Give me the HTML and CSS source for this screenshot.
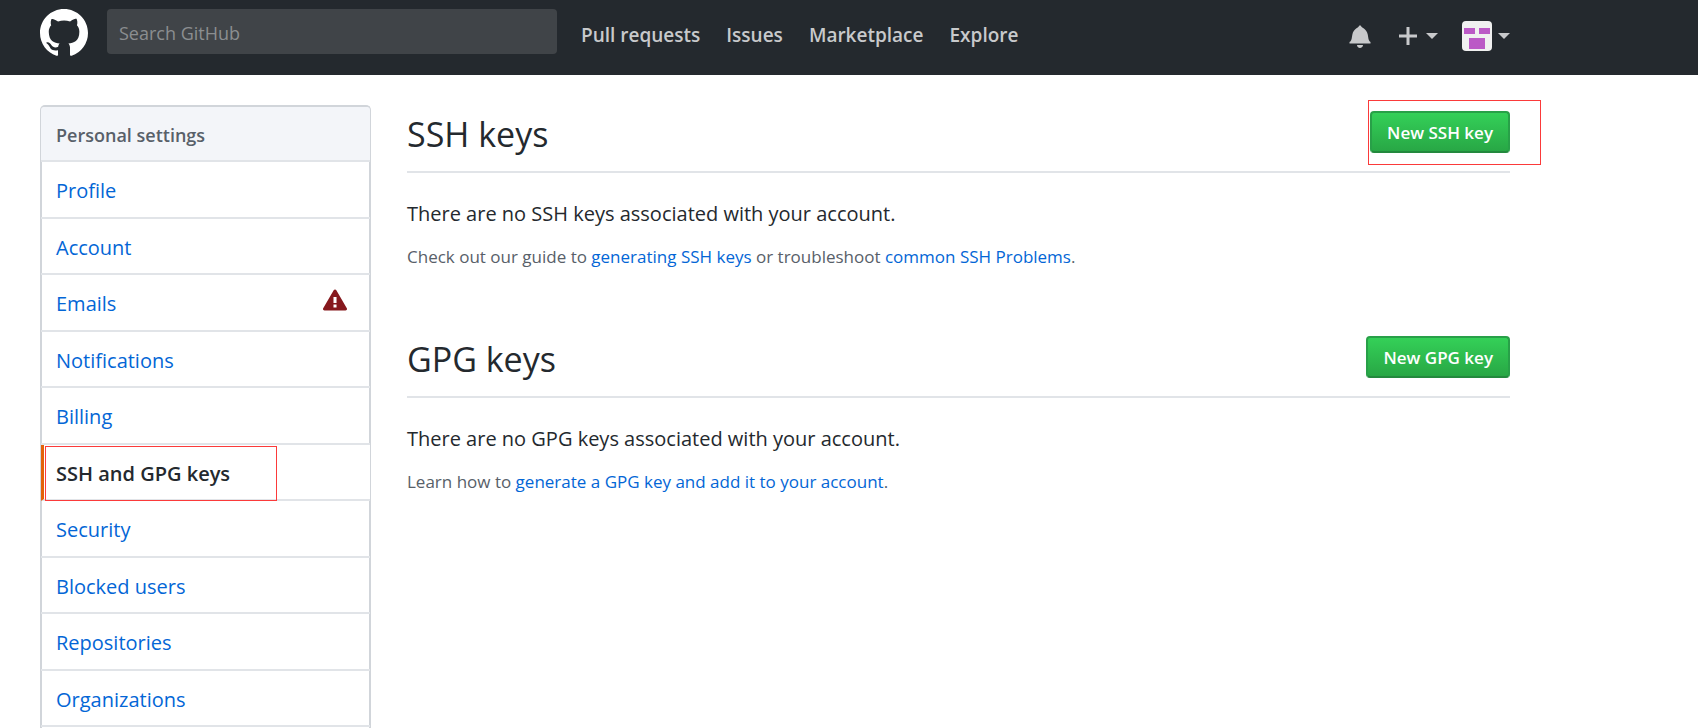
FILE: index.html
```
<!DOCTYPE html>
<html lang="en">
<head>
<meta charset="utf-8">
<meta name="viewport" content="width=device-width, initial-scale=1">
<title>SSH and GPG keys</title>
<link rel="stylesheet" href="styles.css">
</head>
<body>
<header class="header">
  <div class="header-inner">
    <a class="logo" href="#" aria-label="Homepage">
      <svg width="48" height="48" viewBox="0 0 16 16" aria-hidden="true"><path fill="currentColor" fill-rule="evenodd" d="M8 0C3.58 0 0 3.58 0 8c0 3.54 2.29 6.53 5.47 7.59.4.07.55-.17.55-.38 0-.19-.01-.82-.01-1.49-2.01.37-2.53-.49-2.69-.94-.09-.23-.48-.94-.82-1.13-.28-.15-.68-.52-.01-.53.63-.01 1.08.58 1.23.82.72 1.21 1.87.87 2.33.66.07-.52.28-.87.51-1.07-1.78-.2-3.64-.89-3.64-3.95 0-.87.31-1.59.82-2.15-.08-.2-.36-1.02.08-2.12 0 0 .67-.21 2.2.82.64-.18 1.32-.27 2-.27.68 0 1.36.09 2 .27 1.53-1.04 2.2-.82 2.2-.82.44 1.1.16 1.92.08 2.12.51.56.82 1.27.82 2.15 0 3.07-1.87 3.75-3.65 3.95.29.25.54.73.54 1.48 0 1.07-.01 1.93-.01 2.2 0 .21.15.46.55.38A8.013 8.013 0 0 0 16 8c0-4.42-3.58-8-8-8z"/></svg>
    </a>
    <input class="search" type="search" placeholder="Search GitHub" aria-label="Search GitHub">
    <nav class="top-nav" aria-label="Global">
      <a href="#">Pull requests</a>
      <a href="#">Issues</a>
      <a href="#">Marketplace</a>
      <a href="#">Explore</a>
    </nav>
    <div class="user-nav">
      <a class="bell" href="#" aria-label="Notifications">
        <svg width="22" height="24" viewBox="0 0 14 16" aria-hidden="true"><path fill="currentColor" d="M14 12v1H0v-1l.73-.58c.77-.77.81-2.55 1.19-4.42C2.69 3.23 6 2 6 2c0-.55.45-1 1-1s1 .45 1 1c0 0 3.39 1.23 4.16 5 .38 1.88.42 3.66 1.19 4.42l.66.58H14zm-7 4c1.11 0 2-.89 2-2H5c0 1.11.89 2 2 2z"/></svg>
      </a>
      <button class="menu menu-add" type="button" aria-label="Create new">
        <svg width="18" height="24" viewBox="0 0 12 16" aria-hidden="true"><path fill="currentColor" d="M12 9H7v5H5V9H0V7h5V2h2v5h5v2z"/></svg>
        <span class="caret"></span>
      </button>
      <button class="menu menu-profile" type="button" aria-label="View profile and more">
        <svg class="avatar" width="30" height="30" viewBox="0 0 30 30" aria-hidden="true"><rect width="30" height="30" fill="#f0f0f0"/><path fill="#bb59c6" d="M2 7h11v6H2zM17 7h11v6H17zM7 17h16v11H7z"/></svg>
        <span class="caret"></span>
      </button>
    </div>
  </div>
</header>

<div class="page">
  <nav class="side" aria-label="Personal settings">
    <h3 class="side-title">Personal settings</h3>
    <ul class="side-list">
      <li><a href="#">Profile</a></li>
      <li><a href="#">Account</a></li>
      <li><a href="#">Emails
        <svg class="alert" width="24" height="24" viewBox="0 0 16 16" aria-hidden="true"><path fill="currentColor" fill-rule="evenodd" d="M8.893 1.5c-.183-.31-.52-.5-.887-.5s-.703.19-.886.5L.138 13.499a.98.98 0 0 0 0 1.001c.193.31.53.501.886.501h13.964c.367 0 .704-.19.877-.5a1.03 1.03 0 0 0 .01-1.002L8.893 1.5zm.133 11.497H6.987v-2.003h2.039v2.003zm0-3.004H6.987V5.987h2.039v4.006z"/></svg>
      </a></li>
      <li><a href="#">Notifications</a></li>
      <li><a href="#">Billing</a></li>
      <li><a class="selected" href="#" aria-current="page">SSH and GPG keys<span class="mark mark-item"></span></a></li>
      <li><a href="#">Security</a></li>
      <li><a href="#">Blocked users</a></li>
      <li><a href="#">Repositories</a></li>
      <li><a href="#">Organizations</a></li>
    </ul>
  </nav>

  <main class="content">
    <section class="keys">
      <div class="subhead">
        <h2>SSH keys</h2>
        <div class="action"><button class="btn" type="button">New SSH key</button><span class="mark mark-action"></span></div>
      </div>
      <p class="lead">There are no SSH keys associated with your account.</p>
      <p class="note">Check out our guide to <a href="#">generating SSH keys</a> or troubleshoot <a href="#">common SSH Problems</a>.</p>
    </section>
    <section class="keys">
      <div class="subhead">
        <h2>GPG keys</h2>
        <div class="action"><button class="btn" type="button">New GPG key</button></div>
      </div>
      <p class="lead">There are no GPG keys associated with your account.</p>
      <p class="note">Learn how to <a href="#">generate a GPG key and add it to your account</a>.</p>
    </section>
  </main>
</div>
</body>
</html>
```
FILE: styles.css
```
* {
  box-sizing: border-box;
}

body {
  display: flex;
  flex-direction: column;
  min-height: 100vh;
  margin: 0;
  background: #fff;
  color: #24292e;
  font-family: "Segoe UI", "Open Sans", "Noto Sans", sans-serif;
  font-size: 20px;
  line-height: 32px;
}

a {
  color: #0366d6;
  text-decoration: none;
}

h2,
h3,
p,
ul {
  margin: 0;
  padding: 0;
}

button,
input {
  font-family: inherit;
}

/* Top bar */
.header {
  background: #24292e;
  padding: 9px 0 18px;
}

.header-inner,
.page {
  display: flex;
  width: 100%;
  max-width: 1550px;
  padding: 0 40px;
}

.header-inner {
  height: 48px;
}

.logo {
  width: 48px;
  height: 48px;
  margin-right: 19px;
  color: #fff;
}

.logo svg {
  display: block;
}

.search {
  width: 450px;
  height: 45px;
  padding: 2px 12px 0;
  border: 0;
  border-radius: 4px;
  background: #404448;
  color: #fff;
  font-size: 18px;
}

.search::placeholder {
  color: #8b8e90;
  opacity: 1;
}

.top-nav {
  display: flex;
  gap: 26px;
  align-items: center;
  margin-left: 24px;
  padding-top: 4px;
}

.top-nav a {
  color: #c8c9cb;
  font-size: 19px;
  font-weight: 600;
}

.user-nav {
  display: flex;
  align-items: center;
  margin-left: auto;
  padding-top: 6px;
  color: #c8c9cb;
}

.user-nav svg {
  display: block;
}

.bell {
  color: inherit;
}

.menu {
  display: flex;
  align-items: center;
  padding: 0;
  border: 0;
  background: none;
  color: inherit;
}

.menu-add {
  gap: 9px;
  margin: 0 24px 0 28px;
}

.menu-profile {
  gap: 6px;
}

.avatar {
  border-radius: 4px;
}

.caret {
  border: 6px solid transparent;
  border-top-color: currentColor;
  border-bottom: 0;
}

/* Page columns */
.page {
  flex: 1;
  gap: 36px;
  padding-top: 30px;
}

.side {
  flex: none;
  width: 331px;
  border: 2px solid #d1d5da;
  border-bottom: 0;
  border-radius: 5px 5px 0 0;
}

.side-title {
  height: 55px;
  margin: 0 -1px;
  padding: 12px 15px;
  border-bottom: 2px solid #e1e4e8;
  border-radius: 3px 3px 0 0;
  background: #f3f5f9;
  color: #586069;
  font-size: 18px;
  font-weight: 600;
  line-height: 32px;
}

.side-list {
  list-style: none;
}

.side-list a {
  position: relative;
  display: flex;
  justify-content: space-between;
  height: 57px;
  margin: 0 -1px;
  padding: 13px 23px 0 15px;
  border-bottom: 2px solid #e1e4e8;
}

.side-list li:nth-child(even) a {
  height: 56px;
}

.side-list .selected {
  padding-left: 12px;
  border-left: 3px solid #e36209;
  background: #fff;
  color: #24292e;
  font-weight: 600;
}

.alert {
  color: #86181d;
}

/* Key sections */
.content {
  flex: 1;
  min-width: 0;
}

.keys + .keys {
  margin-top: 57px;
}

.subhead {
  display: flex;
  justify-content: space-between;
  align-items: center;
  height: 68px;
  padding-bottom: 8px;
  border-bottom: 2px solid #e1e4e8;
}

.subhead h2 {
  font-size: 34px;
  font-weight: 400;
  line-height: 54px;
}

.action {
  position: relative;
  margin-bottom: 4px;
}

.btn {
  display: block;
  height: 42px;
  padding: 0 15px;
  border: 2px solid #28a048;
  border-bottom-color: #23893d;
  border-radius: 4px;
  background: linear-gradient(#34d058, #28a745);
  color: #fff;
  font-size: 17px;
  font-weight: 600;
}

.lead {
  margin-top: 25px;
}

.note {
  margin-top: 11px;
  color: #586069;
  font-size: 17px;
}

/* Red highlight frames */
.mark {
  position: absolute;
  border: 1px solid #fb3a3a;
  pointer-events: none;
}

.mark-item {
  top: 1px;
  left: 1px;
  width: 232px;
  height: 55px;
}

.mark-action {
  top: -11px;
  right: -31px;
  bottom: -12px;
  left: -2px;
}
```
